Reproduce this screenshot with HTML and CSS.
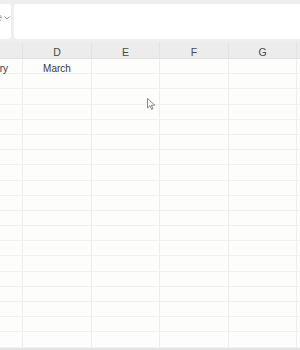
FILE: index.html
```html
<!DOCTYPE html>
<html lang="en">
<head>
    <meta charset="UTF-8">
    <meta name="viewport" content="width=device-width, initial-scale=1.0">
    <title>Sheet</title>
    <link rel="stylesheet" href="styles.css">
</head>
<body>
    <div class="toolbar">
        <div class="name-box">
            <span class="name-text">e</span>
            <svg class="chevron" width="6" height="4" viewBox="0 0 6 4"><path d="M0.5 0.5 L3 3 L5.5 0.5" fill="none" stroke="#8a8a8a" stroke-width="0.9"/></svg>
        </div>
        <div class="formula-box"></div>
    </div>
    <div class="sheet">
        <div class="grid" id="grid">
            <div class="head">C</div>
            <div class="head">D</div>
            <div class="head">E</div>
            <div class="head">F</div>
            <div class="head">G</div>
            <div class="head">H</div>
        </div>
        <svg class="pointer" width="9" height="13" viewBox="0 0 9 13">
            <path d="M0.5 0.5 L0.5 10 L3 7.6 L4.6 11.4 L6 10.8 L4.4 7.2 L7.8 7.2 Z" fill="#fff" stroke="#7a7a7a" stroke-width="0.9" stroke-linejoin="round"/>
        </svg>
    </div>
    <script>
        const grid = document.getElementById('grid');
        const firstRow = ['February', 'March', '', '', '', ''];
        for (let r = 0; r < 19; r++) {
            for (let c = 0; c < 6; c++) {
                const cell = document.createElement('div');
                cell.className = 'cell';
                cell.textContent = r === 0 ? firstRow[c] : '';
                grid.appendChild(cell);
            }
        }
    </script>
</body>
</html>
```
FILE: styles.css
```css
body {
    margin: 0;
    width: 300px;
    height: 350px;
    overflow: hidden;
    background: #eeeeee;
    font-family: "Liberation Sans", Arial, sans-serif;
}
.toolbar {
    display: flex;
    gap: 3px;
    padding: 4px 0 0 0;
    height: 36px;
}
.name-box {
    width: 11px;
    height: 35px;
    background: #ffffff;
    border-radius: 0 3px 3px 0;
    display: flex;
    align-items: flex-start;
    justify-content: flex-end;
    gap: 2px;
    padding: 9px 1px 0 0;
    box-sizing: border-box;
    overflow: hidden;
    font-size: 10px;
    color: #a0a0a0;
}
.name-text {
    line-height: 9px;
}
.chevron {
    margin-top: 3px;
    flex: none;
}
.formula-box {
    flex: 1;
    height: 35px;
    background: #ffffff;
    border-radius: 3px 0 0 3px;
}
.sheet {
    position: relative;
    margin-top: 2px;
    height: 306px;
    overflow: hidden;
    background: #fdfdfc;
    border-bottom: 2px solid #e4e4e4;
}
.grid {
    display: grid;
    grid-template-columns: 69px 69px 68px 69px 68px 69px;
    grid-template-rows: 17px;
    grid-auto-rows: 15.2px;
    margin-left: -46px;
    width: 412px;
}
.head {
    background: #ececec;
    border-bottom: 1px solid #e2e2e2;
    border-right: 1px solid #e4e4e4;
    box-sizing: border-box;
    font-size: 10.5px;
    color: #4a4a4a;
    text-align: center;
    padding-top: 4px;
    line-height: 13px;
}
.cell {
    border-bottom: 1px solid #f1f1f1;
    border-right: 1px solid #ededed;
    box-sizing: border-box;
    font-size: 10px;
    color: #3a3a3a;
    text-align: center;
    padding-top: 2px;
    line-height: 15px;
    white-space: nowrap;
}
.pointer {
    position: absolute;
    left: 147px;
    top: 56px;
}
```
